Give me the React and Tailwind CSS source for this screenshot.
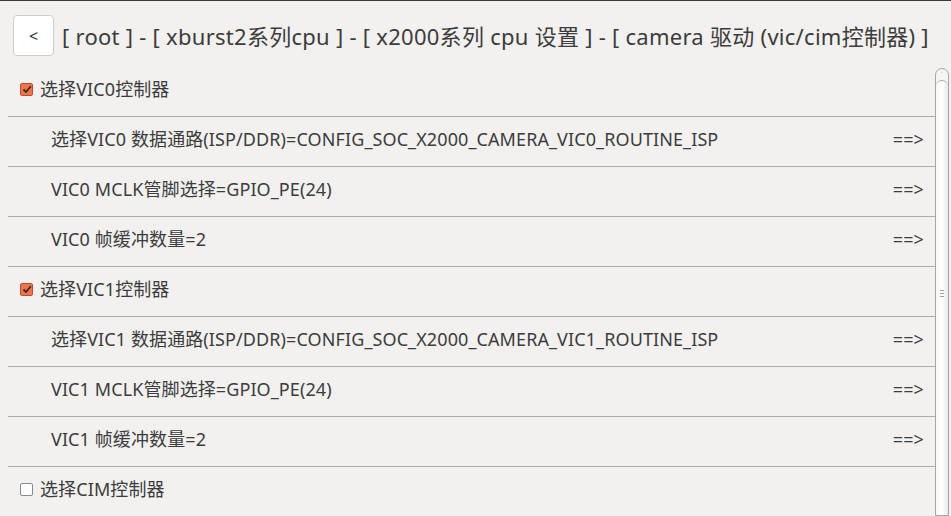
const rows = [
  { type: "check", checked: true, text: "选择VIC0控制器" },
  { type: "item", text: "选择VIC0 数据通路(ISP/DDR)=CONFIG_SOC_X2000_CAMERA_VIC0_ROUTINE_ISP" },
  { type: "item", text: "VIC0 MCLK管脚选择=GPIO_PE(24)" },
  { type: "item", text: "VIC0 帧缓冲数量=2" },
  { type: "check", checked: true, text: "选择VIC1控制器" },
  { type: "item", text: "选择VIC1 数据通路(ISP/DDR)=CONFIG_SOC_X2000_CAMERA_VIC1_ROUTINE_ISP" },
  { type: "item", text: "VIC1 MCLK管脚选择=GPIO_PE(24)" },
  { type: "item", text: "VIC1 帧缓冲数量=2" },
  { type: "check", checked: false, text: "选择CIM控制器" },
];

function CheckBox({ checked }) {
  if (!checked) {
    return <span className="w-[13px] h-[13px] rounded-[2px] border border-[#8a8a8a] bg-white shrink-0" />;
  }
  return (
    <span className="w-[13px] h-[13px] rounded-[2px] border border-[#b8502f] bg-[#ea7550] shrink-0 flex items-center justify-center">
      <svg width="10" height="9" viewBox="0 0 10 9">
        <path d="M1.5 4.5 L4 7 L8.8 1.2" fill="none" stroke="#4a2418" strokeWidth="1.8" />
      </svg>
    </span>
  );
}

export default function App() {
  return (
    <div
      className="w-[951px] h-[516px] overflow-hidden bg-[#f2f1f0] border-t border-[#3a3a3a] text-[#3c3c3c] flex flex-col"
      style={{ fontFamily: '"Noto Sans", "Noto Sans CJK SC", sans-serif' }}
    >
      {/* Header */}
      <div className="flex items-center h-[55px] pl-[13px] pt-[14px] shrink-0">
        <button className="w-[41px] h-[41px] rounded-[4px] border border-[#cfcdca] bg-white text-[16px] text-[#333] flex items-center justify-center">
          &lt;
        </button>
        <span className="ml-[8px] mt-[1px] text-[22px] tracking-[0.27px] whitespace-nowrap">
          [ root ] - [ xburst2系列cpu ] - [ x2000系列 cpu 设置 ] - [ camera 驱动 (vic/cim控制器) ]
        </span>
      </div>

      {/* Body */}
      <div className="flex flex-1 min-h-0 pt-[11px]">
        <div className="flex-1 pl-[8px]">
          {rows.map((r, i) => (
            <div
              key={i}
              className="h-[50px] pb-[4px] border-b border-[#acacac] flex items-center text-[18px] tracking-[0.1px] whitespace-nowrap"
            >
              {r.type === "check" ? (
                <div className="flex items-center gap-[7px] pl-[12px]">
                  <CheckBox checked={r.checked} />
                  <span>{r.text}</span>
                </div>
              ) : (
                <div className="flex items-center justify-between w-full pl-[43px] pr-[11px]">
                  <span>{r.text}</span>
                  <span>==&gt;</span>
                </div>
              )}
            </div>
          ))}
        </div>

        {/* Scrollbar */}
        <div className="w-[14px] mr-[2px] mt-[1px] flex flex-col border border-[#a6a6a6] rounded-t-[7px] bg-[#f6f5f4]">
          <div className="h-[11px] flex items-center justify-center text-[7px] text-[#888] leading-none">˄</div>
          <div className="flex-1 border-t border-[#a6a6a6] rounded-t-[6px] bg-gradient-to-r from-[#f7f7f7] via-[#ffffff] to-[#e9e9e9] flex items-center justify-center">
            <div className="flex flex-col gap-[2px] mb-[10px]">
              <span className="w-[4px] h-[1px] bg-[#a0a0a0]" />
              <span className="w-[4px] h-[1px] bg-[#a0a0a0]" />
              <span className="w-[4px] h-[1px] bg-[#a0a0a0]" />
            </div>
          </div>
        </div>
      </div>
    </div>
  );
}
